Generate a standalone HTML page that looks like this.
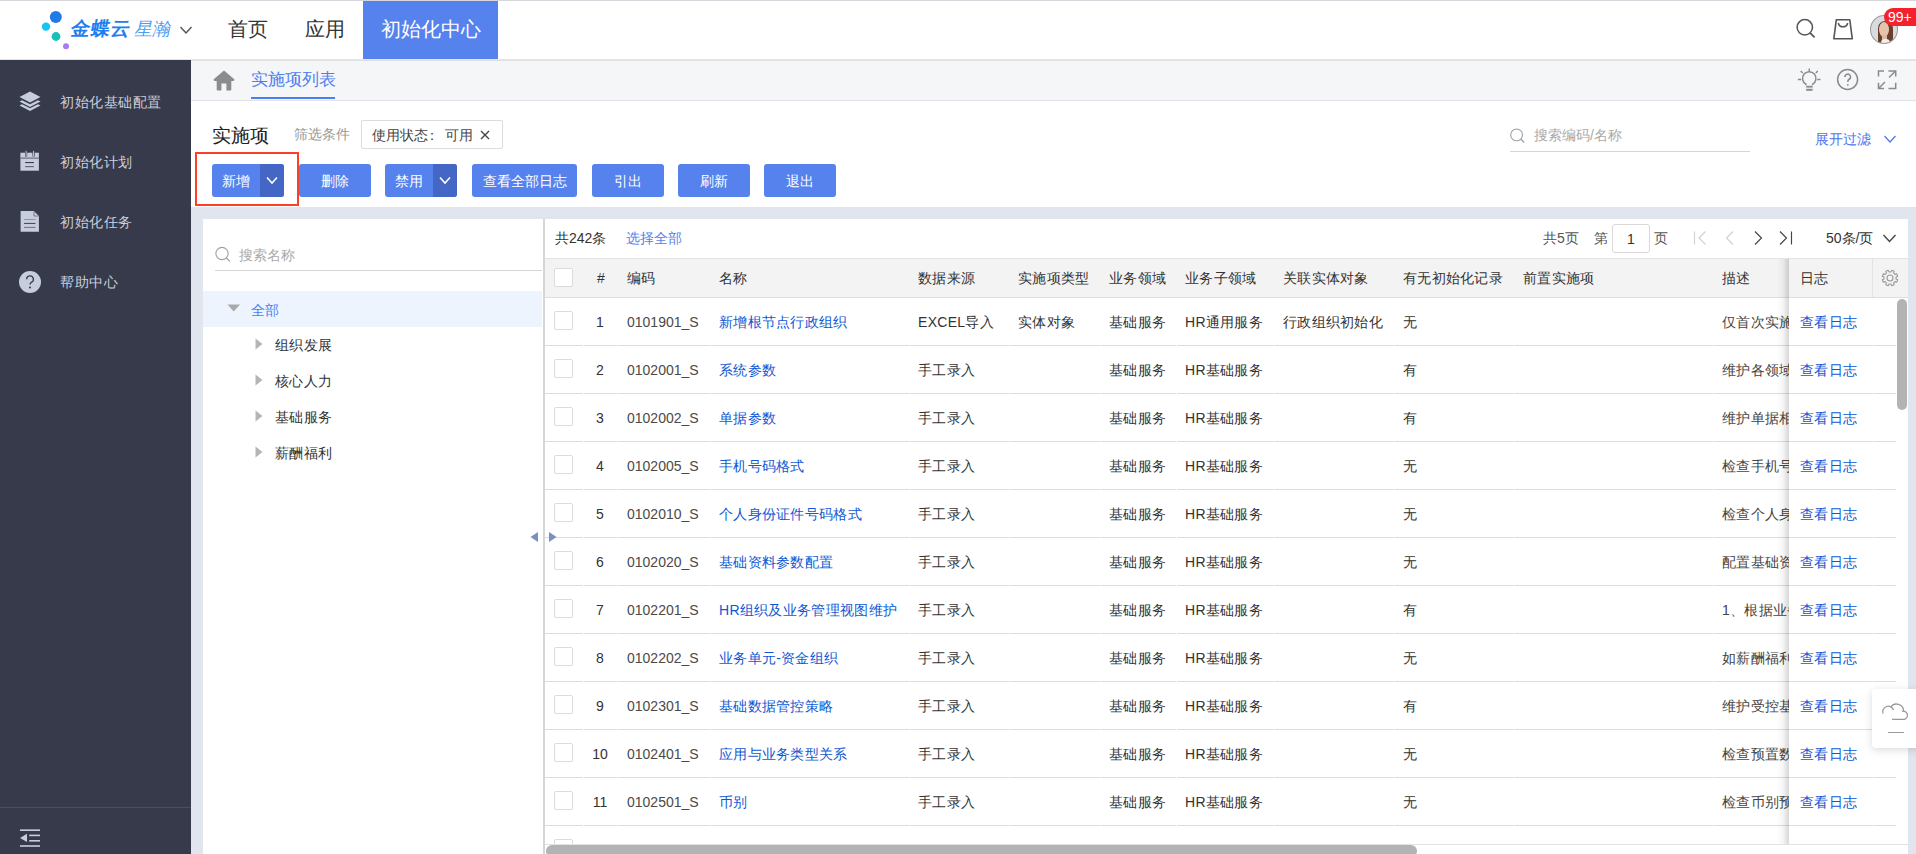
<!DOCTYPE html><html><head><meta charset="utf-8"><style>
*{box-sizing:border-box;margin:0;padding:0}
html,body{width:1916px;height:854px;overflow:hidden;background:#fff}
body{position:relative;font-family:"Liberation Sans",sans-serif;font-size:14px;color:#333}
.a{position:absolute}
.t{position:absolute;white-space:nowrap;line-height:20px}
.btn{position:absolute;top:164px;height:33px;background:#5582ed;border-radius:3px;color:#fff;font-size:14px;line-height:35px;text-align:center}
.btn .dd{position:absolute;right:0;top:0;width:24px;height:33px;background:#4466c4;border-radius:0 3px 3px 0}
.side .t{color:#c9cfdd;font-size:14px}
.cell{position:absolute;white-space:nowrap;line-height:20px;font-size:14px;color:#333;letter-spacing:0.3px}
.lnk{color:#0f58d3}
.cb{position:absolute;left:554px;width:19px;height:19px;border:1px solid #dcdcdc;border-radius:2px;background:#fff}
</style></head><body>
<div class="a" style="left:0;top:0;width:1916px;height:1px;background:#d4d6dc"></div>
<div class="a" style="left:0;top:59px;width:1916px;height:1px;background:#e3e5ea"></div>
<svg class="a" style="left:36px;top:8px" width="40" height="44" viewBox="0 0 40 44"><circle cx="19.8" cy="8.9" r="6" fill="#1f7be8"/><circle cx="10" cy="18.6" r="4.2" fill="#13c5f5"/><circle cx="20" cy="28.5" r="4.4" fill="#16c2b8"/><circle cx="30" cy="38.3" r="3" fill="#a77cf0"/></svg>
<div class="t" style="left:69px;top:18px;font-size:19px;line-height:22px;font-weight:bold;color:#1d80ee;letter-spacing:1px;transform:skewX(-10deg);transform-origin:0 100%">金蝶云</div>
<div class="t" style="left:133px;top:18px;font-size:18px;line-height:22px;font-weight:500;color:#4c9df4;transform:skewX(-12deg);transform-origin:0 100%">星瀚</div>
<svg class="a" style="left:179px;top:25px" width="14" height="10" viewBox="0 0 14 10"><path d="M1.5 2 L7 8 L12.5 2" fill="none" stroke="#555" stroke-width="1.4"/></svg>
<div class="t" style="left:228px;top:17px;font-size:20px;line-height:24px;color:#333">首页</div>
<div class="t" style="left:305px;top:17px;font-size:20px;line-height:24px;color:#333">应用</div>
<div class="a" style="left:363px;top:1px;width:135px;height:58px;background:#5582ed"></div>
<div class="t" style="left:381px;top:17px;font-size:20px;line-height:24px;color:#fff">初始化中心</div>
<svg class="a" style="left:1794px;top:17px" width="24" height="24" viewBox="0 0 24 24"><circle cx="10.8" cy="10.3" r="7.7" fill="none" stroke="#555" stroke-width="1.5"/><path d="M16 15.8 L20.6 20.4" stroke="#555" stroke-width="1.7" fill="none"/></svg>
<svg class="a" style="left:1830px;top:17px" width="26" height="26" viewBox="0 0 26 26"><path d="M6.3 2.8 H19.8 L22.3 21.8 H3.8 Z" fill="none" stroke="#555" stroke-width="1.6" stroke-linejoin="round"/><path d="M8.3 6 A4.8 4.8 0 0 0 17.7 6" fill="none" stroke="#555" stroke-width="1.5"/></svg>
<div class="a" style="left:1870px;top:15px;width:28px;height:29px;border-radius:50%;background:#d8dce1;overflow:hidden;border:1px solid #9a9a9a"><div class="a" style="left:7px;top:5px;width:15px;height:25px;border-radius:7px 7px 3px 3px;background:#6b3f2c"></div><div class="a" style="left:8px;top:6px;width:10px;height:15px;border-radius:50%;background:#e6c3ad"></div><div class="a" style="left:11px;top:19px;width:5px;height:7px;background:#e0b9a2"></div><div class="a" style="left:10px;top:23px;width:9px;height:8px;border-radius:4px 4px 0 0;background:#f0f0f0"></div></div>
<div class="a" style="left:1884px;top:8px;width:40px;height:18px;border-radius:9px;background:#f5222d"></div>
<div class="t" style="left:1888px;top:8px;font-size:14px;line-height:18px;color:#fff">99+</div>
<div class="a side" style="left:0;top:60px;width:191px;height:794px;background:#363a4b">
</div>
<div class="t" style="left:60px;top:92px;font-size:14px;letter-spacing:0.5px;color:#c9cfdd">初始化基础配置</div>
<div class="t" style="left:60px;top:152px;font-size:14px;letter-spacing:0.5px;color:#c9cfdd">初始化计划</div>
<div class="t" style="left:60px;top:212px;font-size:14px;letter-spacing:0.5px;color:#c9cfdd">初始化任务</div>
<div class="t" style="left:60px;top:272px;font-size:14px;letter-spacing:0.5px;color:#c9cfdd">帮助中心</div>
<svg class="a" style="left:18px;top:90px" width="24" height="24" viewBox="0 0 24 24"><path d="M12 17 L1.5 11.5 L4 10.2 L12 14.3 L20 10.2 L22.5 11.5 Z" fill="#c7cddc"/><path d="M12 21 L1.5 15.5 L4 14.2 L12 18.3 L20 14.2 L22.5 15.5 Z" fill="#c7cddc"/><path d="M12 1.5 L22.5 7 L12 12.5 L1.5 7 Z" fill="#c7cddc"/></svg>
<svg class="a" style="left:19px;top:150px" width="22" height="22" viewBox="0 0 22 22"><rect x="1.4" y="2.7" width="18.5" height="18" fill="#c7cddc"/><rect x="1.4" y="7.6" width="18.5" height="1" fill="#5a5f6e"/><rect x="6" y="0.8" width="2.2" height="5.8" fill="#363a4b"/><rect x="6.6" y="0.8" width="1" height="5.8" fill="#c7cddc"/><rect x="13.5" y="0.8" width="2.2" height="5.8" fill="#363a4b"/><rect x="14.1" y="0.8" width="1" height="5.8" fill="#c7cddc"/><rect x="6.2" y="12" width="8.7" height="1.1" fill="#363a4b"/><rect x="6.2" y="16.1" width="8.7" height="1.1" fill="#5a5f6e"/></svg>
<svg class="a" style="left:19px;top:210px" width="22" height="24" viewBox="0 0 22 24"><path d="M1.6 0.9 H14.9 L19.9 6.1 V21.8 H1.6 Z" fill="#c7cddc"/><path d="M15 1.2 V6 H19.6" fill="none" stroke="#6c7080" stroke-width="0.9"/><rect x="5.1" y="9" width="11.4" height="0.9" fill="#8a8fa0"/><rect x="5.1" y="12.9" width="11.4" height="1.1" fill="#4a4e5e"/><rect x="5.1" y="16.9" width="11.4" height="1" fill="#6c7080"/></svg>
<svg class="a" style="left:18px;top:270px" width="24" height="24" viewBox="0 0 24 24"><circle cx="12" cy="12" r="11" fill="#c7cddc"/><path d="M8.6 9.2 A3.4 3.4 0 1 1 13.4 12.3 C12.4 12.8 12 13.4 12 14.6" fill="none" stroke="#363a4b" stroke-width="1.3"/><circle cx="12" cy="17.6" r="1" fill="#363a4b"/></svg>
<div class="a" style="left:0;top:807px;width:191px;height:1px;background:#4a4e5e"></div>
<svg class="a" style="left:19px;top:827px" width="22" height="22" viewBox="0 0 22 22"><rect x="1" y="2.4" width="20" height="1.6" fill="#c7cddc"/><rect x="10.2" y="7.6" width="10.8" height="1.6" fill="#c7cddc"/><rect x="10.2" y="13" width="10.8" height="1.6" fill="#c7cddc"/><rect x="1" y="18.2" width="20" height="1.6" fill="#c7cddc"/><path d="M1 10.9 L8 6.8 V15 Z" fill="#c7cddc"/></svg>
<div class="a" style="left:191px;top:60px;width:1725px;height:40px;background:#f5f6f8"></div>
<div class="a" style="left:191px;top:60px;width:1725px;height:1px;background:#dfe0e3"></div>
<div class="a" style="left:191px;top:100px;width:1725px;height:1px;background:#e2e3e6"></div>
<svg class="a" style="left:213px;top:70px" width="22" height="22" viewBox="0 0 22 22"><path d="M11 0.4 L21.3 9.2 Q21.6 11.1 20 11.1 H18.3 V19.6 Q18.3 20.6 17.3 20.6 H13.4 V13.6 H8.4 V20.6 H4.7 Q3.7 20.6 3.7 19.6 V11.1 H2 Q0.4 11.1 0.7 9.2 Z" fill="#8c8c8c"/></svg>
<div class="t" style="left:251px;top:70px;font-size:17px;color:#4d7fee">实施项列表</div>
<div class="a" style="left:251px;top:97px;width:84px;height:2px;background:#4d7fee"></div>
<svg class="a" style="left:1797px;top:68px" width="24" height="24" viewBox="0 0 24 24"><path d="M8.9 17.3 V16.2 A6.7 6.7 0 1 1 15.6 16.2 V17.3" fill="none" stroke="#8a8a8a" stroke-width="1.5"/><rect x="9.2" y="17.8" width="6.4" height="1.8" fill="#8a8a8a"/><rect x="9.2" y="20.8" width="6.4" height="2" fill="#8a8a8a"/><path d="M12.25 0.4 V3.6 M3.7 3 L5.7 5 M20.8 3 L18.8 5 M0.9 11.5 H4.2 M20.3 11.5 H23.4" stroke="#8a8a8a" stroke-width="1.4" fill="none"/></svg>
<svg class="a" style="left:1836px;top:68px" width="24" height="24" viewBox="0 0 24 24"><circle cx="11.6" cy="11.5" r="10" fill="none" stroke="#8a8a8a" stroke-width="1.5"/><path d="M8.9 9 A2.8 2.8 0 1 1 12.8 11.5 C12 12 11.8 12.5 11.8 14" fill="none" stroke="#8a8a8a" stroke-width="1.5"/><circle cx="11.8" cy="16.8" r="0.9" fill="#8a8a8a"/></svg>
<svg class="a" style="left:1876px;top:69px" width="22" height="22" viewBox="0 0 22 22" fill="none" stroke="#8a8a8a" stroke-width="1.5"><path d="M2.5 7.5 V1.9 H8"/><path d="M12.5 1.9 H19.7 V7.5"/><path d="M19.7 13.8 V19.5 H12.5"/><path d="M8 19.5 H2.5 V13.8"/><path d="M19 2.5 L13 8.5"/><path d="M3 19 L9 13"/></svg>
<div class="t" style="left:212px;top:125px;font-size:19px;line-height:22px;color:#222">实施项</div>
<div class="t" style="left:294px;top:124px;font-size:14px;color:#999">筛选条件</div>
<div class="a" style="left:361px;top:120px;width:142px;height:29px;border:1px solid #dcdcdc;border-radius:2px"></div>
<div class="t" style="left:372px;top:125px;font-size:14px;color:#444">使用状态<span style="display:inline-block;width:17px;text-indent:-3px">：</span>可用</div>
<svg class="a" style="left:480px;top:130px" width="10" height="10" viewBox="0 0 10 10"><path d="M1 1 L9 9 M9 1 L1 9" stroke="#444" stroke-width="1.4"/></svg>
<svg class="a" style="left:1509px;top:128px" width="17" height="17" viewBox="0 0 17 17"><circle cx="7.6" cy="6.9" r="5.9" fill="none" stroke="#a0a0a0" stroke-width="1.1"/><path d="M11.7 11 L15.2 14.5" stroke="#a0a0a0" stroke-width="1.3"/></svg>
<div class="t" style="left:1534px;top:125px;font-size:14px;color:#aaa">搜索编码/名称</div>
<div class="a" style="left:1510px;top:151px;width:240px;height:1px;background:#d4d4d4"></div>
<div class="t" style="left:1815px;top:129px;font-size:14px;color:#4f74f0">展开过滤</div>
<svg class="a" style="left:1883px;top:134px" width="14" height="10" viewBox="0 0 14 10"><path d="M1.5 2 L7 8 L12.5 2" fill="none" stroke="#4f74f0" stroke-width="1.2"/></svg>
<div class="btn" style="left:212px;width:72px"><span style="position:absolute;left:10px;top:0">新增</span><div class="dd"><svg class="a" style="left:6px;top:12px" width="12" height="9" viewBox="0 0 12 9"><path d="M1 1.5 L6 7 L11 1.5" fill="none" stroke="#fff" stroke-width="1.6"/></svg></div></div>
<div class="btn" style="left:299px;width:72px">删除</div>
<div class="btn" style="left:385px;width:72px"><span style="position:absolute;left:10px;top:0">禁用</span><div class="dd"><svg class="a" style="left:6px;top:12px" width="12" height="9" viewBox="0 0 12 9"><path d="M1 1.5 L6 7 L11 1.5" fill="none" stroke="#fff" stroke-width="1.6"/></svg></div></div>
<div class="btn" style="left:472px;width:105px">查看全部日志</div>
<div class="btn" style="left:592px;width:72px">引出</div>
<div class="btn" style="left:678px;width:72px">刷新</div>
<div class="btn" style="left:764px;width:72px">退出</div>
<div class="a" style="left:195px;top:152px;width:104px;height:54px;border:2px solid #fc4026"></div>
<div class="a" style="left:191px;top:207px;width:1725px;height:647px;background:#e1e5ee"></div>
<div class="a" style="left:203px;top:219px;width:340px;height:635px;background:#fff"></div>
<svg class="a" style="left:214px;top:246px" width="18" height="18" viewBox="0 0 18 18"><circle cx="8" cy="7.5" r="6.1" fill="none" stroke="#a0a0a0" stroke-width="1.1"/><path d="M12.2 11.8 L15.8 15.4" stroke="#a0a0a0" stroke-width="1.3"/></svg>
<div class="t" style="left:239px;top:245px;font-size:14px;color:#aaa">搜索名称</div>
<div class="a" style="left:215px;top:270px;width:327px;height:1px;background:#d6d6d6"></div>
<div class="a" style="left:203px;top:291px;width:339px;height:36px;background:#eef4fe"></div>
<svg class="a" style="left:227px;top:304px" width="14" height="8" viewBox="0 0 14 8"><path d="M0.5 0.5 H13 L6.75 7.5 Z" fill="#a9a9a9"/></svg>
<div class="t" style="left:251px;top:300px;font-size:14px;color:#4d7fee">全部</div>
<svg class="a" style="left:255px;top:338px" width="8" height="12" viewBox="0 0 8 12"><path d="M0.5 0.5 L7.5 6 L0.5 11.5 Z" fill="#b5b5b5"/></svg>
<div class="t" style="left:275px;top:335px;font-size:14px;letter-spacing:0.3px;color:#333">组织发展</div>
<svg class="a" style="left:255px;top:374px" width="8" height="12" viewBox="0 0 8 12"><path d="M0.5 0.5 L7.5 6 L0.5 11.5 Z" fill="#b5b5b5"/></svg>
<div class="t" style="left:275px;top:371px;font-size:14px;letter-spacing:0.3px;color:#333">核心人力</div>
<svg class="a" style="left:255px;top:410px" width="8" height="12" viewBox="0 0 8 12"><path d="M0.5 0.5 L7.5 6 L0.5 11.5 Z" fill="#b5b5b5"/></svg>
<div class="t" style="left:275px;top:407px;font-size:14px;letter-spacing:0.3px;color:#333">基础服务</div>
<svg class="a" style="left:255px;top:446px" width="8" height="12" viewBox="0 0 8 12"><path d="M0.5 0.5 L7.5 6 L0.5 11.5 Z" fill="#b5b5b5"/></svg>
<div class="t" style="left:275px;top:443px;font-size:14px;letter-spacing:0.3px;color:#333">薪酬福利</div>
<div class="a" style="left:543px;top:219px;width:2px;height:635px;background:#d6d6d6"></div>
<div class="a" style="left:545px;top:219px;width:1363px;height:635px;background:#fff"></div>
<div class="t" style="left:555px;top:228px;font-size:14px;color:#333">共242条</div>
<div class="t" style="left:626px;top:228px;font-size:14px;color:#5582ed">选择全部</div>
<div class="t" style="left:1543px;top:228px;font-size:14px;color:#555">共5页</div>
<div class="t" style="left:1594px;top:228px;font-size:14px;color:#555">第</div>
<div class="a" style="left:1612px;top:224px;width:38px;height:29px;border:1px solid #d9d9d9;border-radius:3px"></div>
<div class="t" style="left:1612px;top:229px;width:38px;text-align:center;font-size:14px;color:#333">1</div>
<div class="t" style="left:1654px;top:228px;font-size:14px;color:#555">页</div>
<svg class="a" style="left:1690px;top:229px" width="110" height="18" viewBox="0 0 110 18" fill="none" stroke-width="1.15"><path d="M4.5 2.5 V15.5" stroke="#cdd1d9"/><path d="M15.5 2.5 L9 9 L15.5 15.5" stroke="#cdd1d9"/><path d="M43 2.5 L36.5 9 L43 15.5" stroke="#cdd1d9"/><path d="M65 2.5 L71.5 9 L65 15.5" stroke="#444"/><path d="M90 2.5 L96.5 9 L90 15.5" stroke="#444"/><path d="M101.5 2.5 V15.5" stroke="#444"/></svg>
<div class="t" style="left:1826px;top:228px;font-size:14px;color:#333">50条/页</div>
<svg class="a" style="left:1882px;top:233px" width="15" height="11" viewBox="0 0 15 11"><path d="M1.5 2 L7.5 8.5 L13.5 2" fill="none" stroke="#444" stroke-width="1.4"/></svg>
<div class="a" style="left:545px;top:258px;width:1363px;height:40px;background:#f3f3f3;border-top:1px solid #e3e3e3;border-bottom:1px solid #dedede"></div>
<div class="cb" style="top:268px"></div>
<div class="cell" style="left:597px;top:268px">#</div>
<div class="cell" style="left:627px;top:268px">编码</div>
<div class="cell" style="left:719px;top:268px">名称</div>
<div class="cell" style="left:918px;top:268px">数据来源</div>
<div class="cell" style="left:1018px;top:268px">实施项类型</div>
<div class="cell" style="left:1109px;top:268px">业务领域</div>
<div class="cell" style="left:1185px;top:268px">业务子领域</div>
<div class="cell" style="left:1283px;top:268px">关联实体对象</div>
<div class="cell" style="left:1403px;top:268px">有无初始化记录</div>
<div class="cell" style="left:1523px;top:268px">前置实施项</div>
<div class="cell" style="left:1722px;top:268px">描述</div>
<div class="cb" style="top:311px"></div>
<div class="cell" style="left:583px;width:34px;text-align:center;letter-spacing:0;top:312px">1</div>
<div class="cell " style="left:627px;top:312px;letter-spacing:0;color:#4a4a4a">0101901_S</div>
<div class="cell lnk" style="left:719px;top:312px">新增根节点行政组织</div>
<div class="cell " style="left:918px;top:312px">EXCEL导入</div>
<div class="cell " style="left:1018px;top:312px">实体对象</div>
<div class="cell " style="left:1109px;top:312px">基础服务</div>
<div class="cell " style="left:1185px;top:312px">HR通用服务</div>
<div class="cell " style="left:1283px;top:312px">行政组织初始化</div>
<div class="cell " style="left:1403px;top:312px">无</div>
<div class="cell" style="left:1722px;top:312px;width:67px;overflow:hidden;color:#444">仅首次实施时使用</div>
<div class="a" style="left:545px;top:345px;width:1351px;height:1px;background:#dcdcdc"></div>
<div class="a" style="left:583px;top:345px;width:1px;height:1px;background:#fff"></div>
<div class="a" style="left:617px;top:345px;width:1px;height:1px;background:#fff"></div>
<div class="a" style="left:710px;top:345px;width:1px;height:1px;background:#fff"></div>
<div class="a" style="left:909px;top:345px;width:1px;height:1px;background:#fff"></div>
<div class="a" style="left:1009px;top:345px;width:1px;height:1px;background:#fff"></div>
<div class="a" style="left:1100px;top:345px;width:1px;height:1px;background:#fff"></div>
<div class="a" style="left:1176px;top:345px;width:1px;height:1px;background:#fff"></div>
<div class="a" style="left:1274px;top:345px;width:1px;height:1px;background:#fff"></div>
<div class="a" style="left:1394px;top:345px;width:1px;height:1px;background:#fff"></div>
<div class="a" style="left:1514px;top:345px;width:1px;height:1px;background:#fff"></div>
<div class="a" style="left:1713px;top:345px;width:1px;height:1px;background:#fff"></div>
<div class="a" style="left:1873px;top:345px;width:1px;height:1px;background:#fff"></div>
<div class="cb" style="top:359px"></div>
<div class="cell" style="left:583px;width:34px;text-align:center;letter-spacing:0;top:360px">2</div>
<div class="cell " style="left:627px;top:360px;letter-spacing:0;color:#4a4a4a">0102001_S</div>
<div class="cell lnk" style="left:719px;top:360px">系统参数</div>
<div class="cell " style="left:918px;top:360px">手工录入</div>
<div class="cell " style="left:1109px;top:360px">基础服务</div>
<div class="cell " style="left:1185px;top:360px">HR基础服务</div>
<div class="cell " style="left:1403px;top:360px">有</div>
<div class="cell" style="left:1722px;top:360px;width:67px;overflow:hidden;color:#444">维护各领域参数</div>
<div class="a" style="left:545px;top:393px;width:1351px;height:1px;background:#dcdcdc"></div>
<div class="a" style="left:583px;top:393px;width:1px;height:1px;background:#fff"></div>
<div class="a" style="left:617px;top:393px;width:1px;height:1px;background:#fff"></div>
<div class="a" style="left:710px;top:393px;width:1px;height:1px;background:#fff"></div>
<div class="a" style="left:909px;top:393px;width:1px;height:1px;background:#fff"></div>
<div class="a" style="left:1009px;top:393px;width:1px;height:1px;background:#fff"></div>
<div class="a" style="left:1100px;top:393px;width:1px;height:1px;background:#fff"></div>
<div class="a" style="left:1176px;top:393px;width:1px;height:1px;background:#fff"></div>
<div class="a" style="left:1274px;top:393px;width:1px;height:1px;background:#fff"></div>
<div class="a" style="left:1394px;top:393px;width:1px;height:1px;background:#fff"></div>
<div class="a" style="left:1514px;top:393px;width:1px;height:1px;background:#fff"></div>
<div class="a" style="left:1713px;top:393px;width:1px;height:1px;background:#fff"></div>
<div class="a" style="left:1873px;top:393px;width:1px;height:1px;background:#fff"></div>
<div class="cb" style="top:407px"></div>
<div class="cell" style="left:583px;width:34px;text-align:center;letter-spacing:0;top:408px">3</div>
<div class="cell " style="left:627px;top:408px;letter-spacing:0;color:#4a4a4a">0102002_S</div>
<div class="cell lnk" style="left:719px;top:408px">单据参数</div>
<div class="cell " style="left:918px;top:408px">手工录入</div>
<div class="cell " style="left:1109px;top:408px">基础服务</div>
<div class="cell " style="left:1185px;top:408px">HR基础服务</div>
<div class="cell " style="left:1403px;top:408px">有</div>
<div class="cell" style="left:1722px;top:408px;width:67px;overflow:hidden;color:#444">维护单据相关参数</div>
<div class="a" style="left:545px;top:441px;width:1351px;height:1px;background:#dcdcdc"></div>
<div class="a" style="left:583px;top:441px;width:1px;height:1px;background:#fff"></div>
<div class="a" style="left:617px;top:441px;width:1px;height:1px;background:#fff"></div>
<div class="a" style="left:710px;top:441px;width:1px;height:1px;background:#fff"></div>
<div class="a" style="left:909px;top:441px;width:1px;height:1px;background:#fff"></div>
<div class="a" style="left:1009px;top:441px;width:1px;height:1px;background:#fff"></div>
<div class="a" style="left:1100px;top:441px;width:1px;height:1px;background:#fff"></div>
<div class="a" style="left:1176px;top:441px;width:1px;height:1px;background:#fff"></div>
<div class="a" style="left:1274px;top:441px;width:1px;height:1px;background:#fff"></div>
<div class="a" style="left:1394px;top:441px;width:1px;height:1px;background:#fff"></div>
<div class="a" style="left:1514px;top:441px;width:1px;height:1px;background:#fff"></div>
<div class="a" style="left:1713px;top:441px;width:1px;height:1px;background:#fff"></div>
<div class="a" style="left:1873px;top:441px;width:1px;height:1px;background:#fff"></div>
<div class="cb" style="top:455px"></div>
<div class="cell" style="left:583px;width:34px;text-align:center;letter-spacing:0;top:456px">4</div>
<div class="cell " style="left:627px;top:456px;letter-spacing:0;color:#4a4a4a">0102005_S</div>
<div class="cell lnk" style="left:719px;top:456px">手机号码格式</div>
<div class="cell " style="left:918px;top:456px">手工录入</div>
<div class="cell " style="left:1109px;top:456px">基础服务</div>
<div class="cell " style="left:1185px;top:456px">HR基础服务</div>
<div class="cell " style="left:1403px;top:456px">无</div>
<div class="cell" style="left:1722px;top:456px;width:67px;overflow:hidden;color:#444">检查手机号码格式</div>
<div class="a" style="left:545px;top:489px;width:1351px;height:1px;background:#dcdcdc"></div>
<div class="a" style="left:583px;top:489px;width:1px;height:1px;background:#fff"></div>
<div class="a" style="left:617px;top:489px;width:1px;height:1px;background:#fff"></div>
<div class="a" style="left:710px;top:489px;width:1px;height:1px;background:#fff"></div>
<div class="a" style="left:909px;top:489px;width:1px;height:1px;background:#fff"></div>
<div class="a" style="left:1009px;top:489px;width:1px;height:1px;background:#fff"></div>
<div class="a" style="left:1100px;top:489px;width:1px;height:1px;background:#fff"></div>
<div class="a" style="left:1176px;top:489px;width:1px;height:1px;background:#fff"></div>
<div class="a" style="left:1274px;top:489px;width:1px;height:1px;background:#fff"></div>
<div class="a" style="left:1394px;top:489px;width:1px;height:1px;background:#fff"></div>
<div class="a" style="left:1514px;top:489px;width:1px;height:1px;background:#fff"></div>
<div class="a" style="left:1713px;top:489px;width:1px;height:1px;background:#fff"></div>
<div class="a" style="left:1873px;top:489px;width:1px;height:1px;background:#fff"></div>
<div class="cb" style="top:503px"></div>
<div class="cell" style="left:583px;width:34px;text-align:center;letter-spacing:0;top:504px">5</div>
<div class="cell " style="left:627px;top:504px;letter-spacing:0;color:#4a4a4a">0102010_S</div>
<div class="cell lnk" style="left:719px;top:504px">个人身份证件号码格式</div>
<div class="cell " style="left:918px;top:504px">手工录入</div>
<div class="cell " style="left:1109px;top:504px">基础服务</div>
<div class="cell " style="left:1185px;top:504px">HR基础服务</div>
<div class="cell " style="left:1403px;top:504px">无</div>
<div class="cell" style="left:1722px;top:504px;width:67px;overflow:hidden;color:#444">检查个人身份证件</div>
<div class="a" style="left:545px;top:537px;width:1351px;height:1px;background:#dcdcdc"></div>
<div class="a" style="left:583px;top:537px;width:1px;height:1px;background:#fff"></div>
<div class="a" style="left:617px;top:537px;width:1px;height:1px;background:#fff"></div>
<div class="a" style="left:710px;top:537px;width:1px;height:1px;background:#fff"></div>
<div class="a" style="left:909px;top:537px;width:1px;height:1px;background:#fff"></div>
<div class="a" style="left:1009px;top:537px;width:1px;height:1px;background:#fff"></div>
<div class="a" style="left:1100px;top:537px;width:1px;height:1px;background:#fff"></div>
<div class="a" style="left:1176px;top:537px;width:1px;height:1px;background:#fff"></div>
<div class="a" style="left:1274px;top:537px;width:1px;height:1px;background:#fff"></div>
<div class="a" style="left:1394px;top:537px;width:1px;height:1px;background:#fff"></div>
<div class="a" style="left:1514px;top:537px;width:1px;height:1px;background:#fff"></div>
<div class="a" style="left:1713px;top:537px;width:1px;height:1px;background:#fff"></div>
<div class="a" style="left:1873px;top:537px;width:1px;height:1px;background:#fff"></div>
<div class="cb" style="top:551px"></div>
<div class="cell" style="left:583px;width:34px;text-align:center;letter-spacing:0;top:552px">6</div>
<div class="cell " style="left:627px;top:552px;letter-spacing:0;color:#4a4a4a">0102020_S</div>
<div class="cell lnk" style="left:719px;top:552px">基础资料参数配置</div>
<div class="cell " style="left:918px;top:552px">手工录入</div>
<div class="cell " style="left:1109px;top:552px">基础服务</div>
<div class="cell " style="left:1185px;top:552px">HR基础服务</div>
<div class="cell " style="left:1403px;top:552px">无</div>
<div class="cell" style="left:1722px;top:552px;width:67px;overflow:hidden;color:#444">配置基础资料参数</div>
<div class="a" style="left:545px;top:585px;width:1351px;height:1px;background:#dcdcdc"></div>
<div class="a" style="left:583px;top:585px;width:1px;height:1px;background:#fff"></div>
<div class="a" style="left:617px;top:585px;width:1px;height:1px;background:#fff"></div>
<div class="a" style="left:710px;top:585px;width:1px;height:1px;background:#fff"></div>
<div class="a" style="left:909px;top:585px;width:1px;height:1px;background:#fff"></div>
<div class="a" style="left:1009px;top:585px;width:1px;height:1px;background:#fff"></div>
<div class="a" style="left:1100px;top:585px;width:1px;height:1px;background:#fff"></div>
<div class="a" style="left:1176px;top:585px;width:1px;height:1px;background:#fff"></div>
<div class="a" style="left:1274px;top:585px;width:1px;height:1px;background:#fff"></div>
<div class="a" style="left:1394px;top:585px;width:1px;height:1px;background:#fff"></div>
<div class="a" style="left:1514px;top:585px;width:1px;height:1px;background:#fff"></div>
<div class="a" style="left:1713px;top:585px;width:1px;height:1px;background:#fff"></div>
<div class="a" style="left:1873px;top:585px;width:1px;height:1px;background:#fff"></div>
<div class="cb" style="top:599px"></div>
<div class="cell" style="left:583px;width:34px;text-align:center;letter-spacing:0;top:600px">7</div>
<div class="cell " style="left:627px;top:600px;letter-spacing:0;color:#4a4a4a">0102201_S</div>
<div class="cell lnk" style="left:719px;top:600px">HR组织及业务管理视图维护</div>
<div class="cell " style="left:918px;top:600px">手工录入</div>
<div class="cell " style="left:1109px;top:600px">基础服务</div>
<div class="cell " style="left:1185px;top:600px">HR基础服务</div>
<div class="cell " style="left:1403px;top:600px">有</div>
<div class="cell" style="left:1722px;top:600px;width:67px;overflow:hidden;color:#444">1、根据业务需要</div>
<div class="a" style="left:545px;top:633px;width:1351px;height:1px;background:#dcdcdc"></div>
<div class="a" style="left:583px;top:633px;width:1px;height:1px;background:#fff"></div>
<div class="a" style="left:617px;top:633px;width:1px;height:1px;background:#fff"></div>
<div class="a" style="left:710px;top:633px;width:1px;height:1px;background:#fff"></div>
<div class="a" style="left:909px;top:633px;width:1px;height:1px;background:#fff"></div>
<div class="a" style="left:1009px;top:633px;width:1px;height:1px;background:#fff"></div>
<div class="a" style="left:1100px;top:633px;width:1px;height:1px;background:#fff"></div>
<div class="a" style="left:1176px;top:633px;width:1px;height:1px;background:#fff"></div>
<div class="a" style="left:1274px;top:633px;width:1px;height:1px;background:#fff"></div>
<div class="a" style="left:1394px;top:633px;width:1px;height:1px;background:#fff"></div>
<div class="a" style="left:1514px;top:633px;width:1px;height:1px;background:#fff"></div>
<div class="a" style="left:1713px;top:633px;width:1px;height:1px;background:#fff"></div>
<div class="a" style="left:1873px;top:633px;width:1px;height:1px;background:#fff"></div>
<div class="cb" style="top:647px"></div>
<div class="cell" style="left:583px;width:34px;text-align:center;letter-spacing:0;top:648px">8</div>
<div class="cell " style="left:627px;top:648px;letter-spacing:0;color:#4a4a4a">0102202_S</div>
<div class="cell lnk" style="left:719px;top:648px">业务单元-资金组织</div>
<div class="cell " style="left:918px;top:648px">手工录入</div>
<div class="cell " style="left:1109px;top:648px">基础服务</div>
<div class="cell " style="left:1185px;top:648px">HR基础服务</div>
<div class="cell " style="left:1403px;top:648px">无</div>
<div class="cell" style="left:1722px;top:648px;width:67px;overflow:hidden;color:#444">如薪酬福利业务</div>
<div class="a" style="left:545px;top:681px;width:1351px;height:1px;background:#dcdcdc"></div>
<div class="a" style="left:583px;top:681px;width:1px;height:1px;background:#fff"></div>
<div class="a" style="left:617px;top:681px;width:1px;height:1px;background:#fff"></div>
<div class="a" style="left:710px;top:681px;width:1px;height:1px;background:#fff"></div>
<div class="a" style="left:909px;top:681px;width:1px;height:1px;background:#fff"></div>
<div class="a" style="left:1009px;top:681px;width:1px;height:1px;background:#fff"></div>
<div class="a" style="left:1100px;top:681px;width:1px;height:1px;background:#fff"></div>
<div class="a" style="left:1176px;top:681px;width:1px;height:1px;background:#fff"></div>
<div class="a" style="left:1274px;top:681px;width:1px;height:1px;background:#fff"></div>
<div class="a" style="left:1394px;top:681px;width:1px;height:1px;background:#fff"></div>
<div class="a" style="left:1514px;top:681px;width:1px;height:1px;background:#fff"></div>
<div class="a" style="left:1713px;top:681px;width:1px;height:1px;background:#fff"></div>
<div class="a" style="left:1873px;top:681px;width:1px;height:1px;background:#fff"></div>
<div class="cb" style="top:695px"></div>
<div class="cell" style="left:583px;width:34px;text-align:center;letter-spacing:0;top:696px">9</div>
<div class="cell " style="left:627px;top:696px;letter-spacing:0;color:#4a4a4a">0102301_S</div>
<div class="cell lnk" style="left:719px;top:696px">基础数据管控策略</div>
<div class="cell " style="left:918px;top:696px">手工录入</div>
<div class="cell " style="left:1109px;top:696px">基础服务</div>
<div class="cell " style="left:1185px;top:696px">HR基础服务</div>
<div class="cell " style="left:1403px;top:696px">有</div>
<div class="cell" style="left:1722px;top:696px;width:67px;overflow:hidden;color:#444">维护受控基础数据</div>
<div class="a" style="left:545px;top:729px;width:1351px;height:1px;background:#dcdcdc"></div>
<div class="a" style="left:583px;top:729px;width:1px;height:1px;background:#fff"></div>
<div class="a" style="left:617px;top:729px;width:1px;height:1px;background:#fff"></div>
<div class="a" style="left:710px;top:729px;width:1px;height:1px;background:#fff"></div>
<div class="a" style="left:909px;top:729px;width:1px;height:1px;background:#fff"></div>
<div class="a" style="left:1009px;top:729px;width:1px;height:1px;background:#fff"></div>
<div class="a" style="left:1100px;top:729px;width:1px;height:1px;background:#fff"></div>
<div class="a" style="left:1176px;top:729px;width:1px;height:1px;background:#fff"></div>
<div class="a" style="left:1274px;top:729px;width:1px;height:1px;background:#fff"></div>
<div class="a" style="left:1394px;top:729px;width:1px;height:1px;background:#fff"></div>
<div class="a" style="left:1514px;top:729px;width:1px;height:1px;background:#fff"></div>
<div class="a" style="left:1713px;top:729px;width:1px;height:1px;background:#fff"></div>
<div class="a" style="left:1873px;top:729px;width:1px;height:1px;background:#fff"></div>
<div class="cb" style="top:743px"></div>
<div class="cell" style="left:583px;width:34px;text-align:center;letter-spacing:0;top:744px">10</div>
<div class="cell " style="left:627px;top:744px;letter-spacing:0;color:#4a4a4a">0102401_S</div>
<div class="cell lnk" style="left:719px;top:744px">应用与业务类型关系</div>
<div class="cell " style="left:918px;top:744px">手工录入</div>
<div class="cell " style="left:1109px;top:744px">基础服务</div>
<div class="cell " style="left:1185px;top:744px">HR基础服务</div>
<div class="cell " style="left:1403px;top:744px">无</div>
<div class="cell" style="left:1722px;top:744px;width:67px;overflow:hidden;color:#444">检查预置数据</div>
<div class="a" style="left:545px;top:777px;width:1351px;height:1px;background:#dcdcdc"></div>
<div class="a" style="left:583px;top:777px;width:1px;height:1px;background:#fff"></div>
<div class="a" style="left:617px;top:777px;width:1px;height:1px;background:#fff"></div>
<div class="a" style="left:710px;top:777px;width:1px;height:1px;background:#fff"></div>
<div class="a" style="left:909px;top:777px;width:1px;height:1px;background:#fff"></div>
<div class="a" style="left:1009px;top:777px;width:1px;height:1px;background:#fff"></div>
<div class="a" style="left:1100px;top:777px;width:1px;height:1px;background:#fff"></div>
<div class="a" style="left:1176px;top:777px;width:1px;height:1px;background:#fff"></div>
<div class="a" style="left:1274px;top:777px;width:1px;height:1px;background:#fff"></div>
<div class="a" style="left:1394px;top:777px;width:1px;height:1px;background:#fff"></div>
<div class="a" style="left:1514px;top:777px;width:1px;height:1px;background:#fff"></div>
<div class="a" style="left:1713px;top:777px;width:1px;height:1px;background:#fff"></div>
<div class="a" style="left:1873px;top:777px;width:1px;height:1px;background:#fff"></div>
<div class="cb" style="top:791px"></div>
<div class="cell" style="left:583px;width:34px;text-align:center;letter-spacing:0;top:792px">11</div>
<div class="cell " style="left:627px;top:792px;letter-spacing:0;color:#4a4a4a">0102501_S</div>
<div class="cell lnk" style="left:719px;top:792px">币别</div>
<div class="cell " style="left:918px;top:792px">手工录入</div>
<div class="cell " style="left:1109px;top:792px">基础服务</div>
<div class="cell " style="left:1185px;top:792px">HR基础服务</div>
<div class="cell " style="left:1403px;top:792px">无</div>
<div class="cell" style="left:1722px;top:792px;width:67px;overflow:hidden;color:#444">检查币别预置数据</div>
<div class="a" style="left:545px;top:825px;width:1351px;height:1px;background:#dcdcdc"></div>
<div class="a" style="left:583px;top:825px;width:1px;height:1px;background:#fff"></div>
<div class="a" style="left:617px;top:825px;width:1px;height:1px;background:#fff"></div>
<div class="a" style="left:710px;top:825px;width:1px;height:1px;background:#fff"></div>
<div class="a" style="left:909px;top:825px;width:1px;height:1px;background:#fff"></div>
<div class="a" style="left:1009px;top:825px;width:1px;height:1px;background:#fff"></div>
<div class="a" style="left:1100px;top:825px;width:1px;height:1px;background:#fff"></div>
<div class="a" style="left:1176px;top:825px;width:1px;height:1px;background:#fff"></div>
<div class="a" style="left:1274px;top:825px;width:1px;height:1px;background:#fff"></div>
<div class="a" style="left:1394px;top:825px;width:1px;height:1px;background:#fff"></div>
<div class="a" style="left:1514px;top:825px;width:1px;height:1px;background:#fff"></div>
<div class="a" style="left:1713px;top:825px;width:1px;height:1px;background:#fff"></div>
<div class="a" style="left:1873px;top:825px;width:1px;height:1px;background:#fff"></div>
<div class="cb" style="top:839px"></div>
<div class="a" style="left:1789px;top:258px;width:119px;height:587px;background:transparent"></div>
<div class="a" style="left:1777px;top:259px;width:12px;height:585px;background:linear-gradient(to right,rgba(0,0,0,0),rgba(0,0,0,0.04) 50%,rgba(0,0,0,0.16))"></div>
<div class="a" style="left:1789px;top:259px;width:107px;height:38px;background:#f3f3f3"></div>
<div class="cell" style="left:1800px;top:268px">日志</div>
<div class="a" style="left:1872px;top:259px;width:1px;height:38px;background:#e3e3e3"></div>
<svg class="a" style="left:1880px;top:269px" width="20" height="20" viewBox="0 0 20 20"><path d="M10.90 2.97 L11.84 1.32 L14.13 2.26 L13.63 4.10 L14.90 5.37 L16.74 4.87 L17.68 7.16 L16.03 8.10 L16.03 9.90 L17.68 10.84 L16.74 13.13 L14.90 12.63 L13.63 13.90 L14.13 15.74 L11.84 16.68 L10.90 15.03 L9.10 15.03 L8.16 16.68 L5.87 15.74 L6.37 13.90 L5.10 12.63 L3.26 13.13 L2.32 10.84 L3.97 9.90 L3.97 8.10 L2.32 7.16 L3.26 4.87 L5.10 5.37 L6.37 4.10 L5.87 2.26 L8.16 1.32 L9.10 2.97 Z" fill="none" stroke="#999" stroke-width="1.1" stroke-linejoin="round"/><circle cx="10" cy="9" r="3" fill="none" stroke="#999" stroke-width="1.1"/></svg>
<div class="cell lnk" style="left:1800px;top:312px">查看日志</div>
<div class="cell lnk" style="left:1800px;top:360px">查看日志</div>
<div class="cell lnk" style="left:1800px;top:408px">查看日志</div>
<div class="cell lnk" style="left:1800px;top:456px">查看日志</div>
<div class="cell lnk" style="left:1800px;top:504px">查看日志</div>
<div class="cell lnk" style="left:1800px;top:552px">查看日志</div>
<div class="cell lnk" style="left:1800px;top:600px">查看日志</div>
<div class="cell lnk" style="left:1800px;top:648px">查看日志</div>
<div class="cell lnk" style="left:1800px;top:696px">查看日志</div>
<div class="cell lnk" style="left:1800px;top:744px">查看日志</div>
<div class="cell lnk" style="left:1800px;top:792px">查看日志</div>
<div class="a" style="left:1897px;top:299px;width:10px;height:111px;border-radius:5px;background:#b3b3b3"></div>
<div class="a" style="left:545px;top:844px;width:1363px;height:1px;background:#e3e3e3"></div>
<div class="a" style="left:546px;top:845px;width:871px;height:12px;border-radius:6px;background:#b3b3b3"></div>
<div class="a" style="left:1872px;top:689px;width:50px;height:59px;background:#fff;border-radius:4px;box-shadow:0 2px 8px rgba(0,0,0,0.15)"></div>
<svg class="a" style="left:1880px;top:700px" width="32" height="22" viewBox="0 0 32 22"><path d="M3 13.5 A5.5 5.5 0 0 1 13.5 10 M10.5 7.5 A7 7 0 0 1 23.5 11.5 M22 11.3 A4 4 0 0 1 24.5 19.3 H12" fill="none" stroke="#999" stroke-width="1.3"/></svg>
<div class="a" style="left:1888px;top:732px;width:16px;height:1px;background:#999"></div>
<svg class="a" style="left:529px;top:530px" width="30" height="14" viewBox="0 0 30 14"><path d="M9 2 V12 L1.5 7 Z" fill="#7c8fc2"/><path d="M20 2 V12 L27.5 7 Z" fill="#7c8fc2"/></svg>
</body></html>
